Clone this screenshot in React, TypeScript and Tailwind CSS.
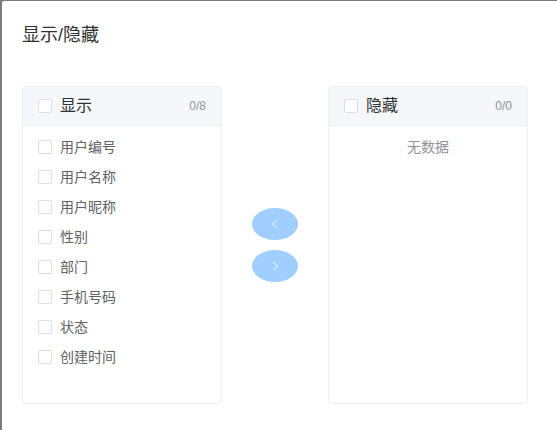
import React from "react";

const font = { fontFamily: '"Liberation Sans", "Noto Sans CJK SC", sans-serif' };

function Checkbox() {
  return <span className="inline-block w-[14px] h-[14px] border border-[#dcdfe6] rounded-[2px] bg-white shrink-0" />;
}

function Panel({ title, count, items }: { title: string; count: string; items: string[] }) {
  return (
    <div className="w-[200px] h-[318px] border border-[#ebeef5] rounded-[4px] bg-white overflow-hidden flex flex-col">
      <div className="h-[39px] bg-[#f5f7fa] border-b border-[#ebeef5] flex items-center px-[15px] shrink-0">
        <Checkbox />
        <span className="ml-[8px] text-[16px] text-[#303133]">{title}</span>
        <span className="ml-auto text-[12px] text-[#909399]">{count}</span>
      </div>
      <div className="py-[6px]">
        {items.length === 0 ? (
          <div className="h-[30px] leading-[30px] text-center text-[14px] text-[#909399]">无数据</div>
        ) : (
          items.map((it) => (
            <div key={it} className="h-[30px] flex items-center pl-[15px]">
              <Checkbox />
              <span className="ml-[8px] text-[14px] text-[#606266]">{it}</span>
            </div>
          ))
        )}
      </div>
    </div>
  );
}

function Arrow({ dir }: { dir: "left" | "right" }) {
  return (
    <svg width="12" height="12" viewBox="0 0 12 12" fill="none">
      {dir === "left" ? (
        <polyline points="7.5,2 3.5,6 7.5,10" stroke="white" strokeWidth="1" />
      ) : (
        <polyline points="4.5,2 8.5,6 4.5,10" stroke="white" strokeWidth="1" />
      )}
    </svg>
  );
}

export default function App() {
  const items = ["用户编号", "用户名称", "用户昵称", "性别", "部门", "手机号码", "状态", "创建时间"];
  return (
    <div className="w-[557px] h-[430px] bg-[#7b7b7b] pt-[1px] pl-[2px] overflow-hidden" style={font}>
      <div className="bg-white h-[440px] w-[700px] rounded-tl-[2px]">
        <div className="px-[20px] pt-[22px] pb-[9px]">
          <div className="text-[18px] leading-[24px] text-[#303133]">显示/隐藏</div>
        </div>
        <div className="px-[20px] pt-[30px] flex items-center">
          <Panel title="显示" count="0/8" items={items} />
          <div className="px-[30px] flex flex-col gap-[10px]">
            <div className="w-[46px] h-[32px] rounded-[50%] bg-[#a0cfff] flex items-center justify-center">
              <Arrow dir="left" />
            </div>
            <div className="w-[46px] h-[32px] rounded-[50%] bg-[#a0cfff] flex items-center justify-center">
              <Arrow dir="right" />
            </div>
          </div>
          <Panel title="隐藏" count="0/0" items={[]} />
        </div>
      </div>
    </div>
  );
}
